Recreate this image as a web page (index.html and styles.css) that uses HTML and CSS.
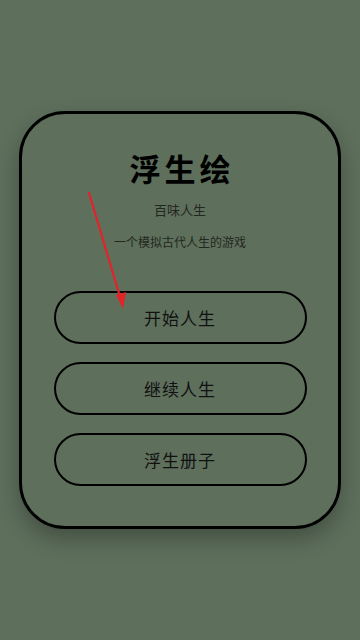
FILE: index.html
```html
<!DOCTYPE html>
<html lang="zh">
<head>
<meta charset="utf-8">
<link rel="stylesheet" href="styles.css">
</head>
<body>
<main class="screen">
  <section class="card">
    <h1 class="title">浮生绘</h1>
    <p class="subtitle">百味人生</p>
    <p class="desc">一个模拟古代人生的游戏</p>
    <div class="menu">
      <button class="btn">开始人生</button>
      <button class="btn">继续人生</button>
      <button class="btn">浮生册子</button>
    </div>
  </section>
  <svg class="arrow" width="360" height="640" viewBox="0 0 360 640">
    <line x1="89" y1="193" x2="121" y2="300" stroke="#e3232a" stroke-width="2.2" stroke-linecap="round"/>
    <polygon points="123,309 116,295 126,292" fill="#e3232a"/>
  </svg>
</main>
</body>
</html>
```
FILE: styles.css
```css
html, body {
  margin: 0;
  padding: 0;
  background: #5e6f5c;
}
body {
  font-family: "Noto Sans CJK SC", "Noto Sans", sans-serif;
}
.screen {
  position: relative;
  width: 360px;
  height: 640px;
  display: flex;
  align-items: center;
  justify-content: center;
}
.card {
  box-sizing: border-box;
  width: 322px;
  height: 418px;
  border: 3px solid #000;
  border-radius: 46px;
  background: #5e6f5c;
  box-shadow: 0 10px 22px rgba(0,0,0,0.28);
  display: flex;
  flex-direction: column;
  align-items: center;
  padding: 36px 32px 40px;
}
.title {
  margin: 0;
  font-size: 31px;
  line-height: 36px;
  font-weight: 700;
  letter-spacing: 4px;
  margin-right: -4px;
  color: #000;
}
.subtitle {
  margin: 15px 0 0;
  font-size: 13px;
  line-height: 18px;
  color: #222820;
}
.desc {
  margin: 14px 0 0;
  font-size: 12px;
  line-height: 17px;
  color: #222820;
}
.menu {
  margin-top: 41px;
  display: flex;
  flex-direction: column;
  gap: 18px;
  width: 253px;
}
.btn {
  box-sizing: border-box;
  height: 53px;
  width: 100%;
  border: 2px solid #000;
  border-radius: 27px;
  background: transparent;
  font-family: inherit;
  font-size: 17px;
  color: #111;
  letter-spacing: 1px;
  padding: 0;
}
.arrow {
  position: absolute;
  left: 0;
  top: 0;
  pointer-events: none;
}
```
